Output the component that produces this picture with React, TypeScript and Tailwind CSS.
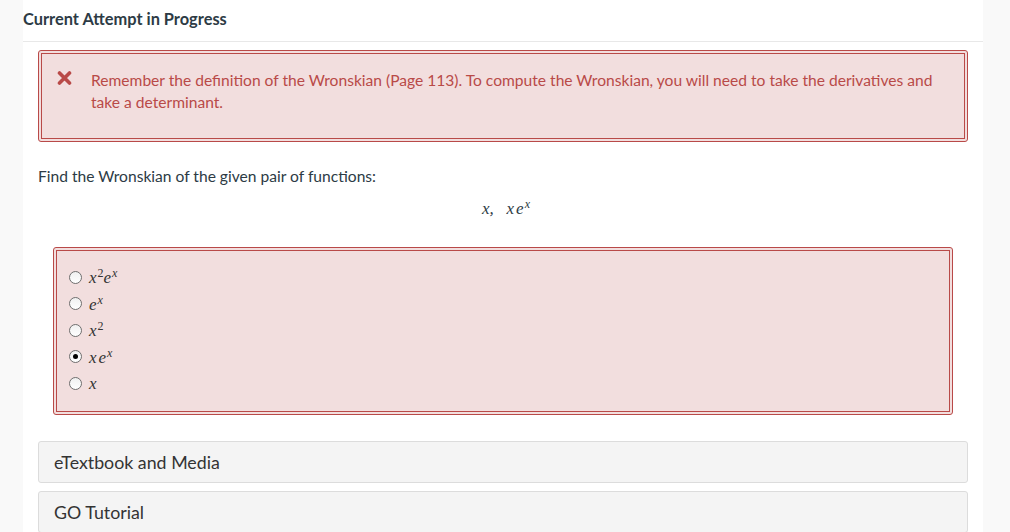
import React from "react";

const M = ({ children }: { children: React.ReactNode }) => (
  <span className="italic" style={{ fontFamily: '"Liberation Serif", "DejaVu Serif", serif' }}>{children}</span>
);

function Radio({ checked }: { checked?: boolean }) {
  return (
    <span className="w-[13px] h-[13px] rounded-full border border-[#6f6f6f] bg-gradient-to-b from-[#f0f0f0] to-white flex items-center justify-center shrink-0">
      {checked && <span className="w-[5px] h-[5px] rounded-full bg-black" />}
    </span>
  );
}

const Sup = ({ children, italic = true }: { children: React.ReactNode; italic?: boolean }) => (
  <sup className={"text-[12px] ml-[1px] " + (italic ? "" : "not-italic")}>{children}</sup>
);

const XE = () => (
  <>
    x<span className="ml-[2px]">e</span>
    <Sup>x</Sup>
  </>
);

const options: { node: React.ReactNode; checked?: boolean }[] = [
  { node: <M>x<Sup italic={false}>2</Sup>e<Sup>x</Sup></M> },
  { node: <M>e<Sup>x</Sup></M> },
  { node: <M>x<Sup italic={false}>2</Sup></M> },
  { node: <M><XE /></M>, checked: true },
  { node: <M>x</M> },
];

function Cross() {
  return (
    <svg width="15" height="14" viewBox="0 0 15 14" className="shrink-0 mt-[2px]">
      <path d="M2.5 2 L12.5 12 M12.5 2 L2.5 12" stroke="#b94a48" strokeWidth="3.6" strokeLinecap="round" />
    </svg>
  );
}

export default function App() {
  return (
    <div className="w-[1010px] h-[532px] bg-[#f9f9f9] overflow-hidden" style={{ fontFamily: 'Lato, "Open Sans", sans-serif' }}>
      <div className="ml-[23px] w-[960px] h-full bg-white">
        <div className="h-[42px] border-b border-[#e8e8e8] flex items-start">
          <h2 className="text-[16.4px] font-bold text-[#2d3b45] leading-[20px] mt-[9px]">Current Attempt in Progress</h2>
        </div>
        <div className="px-[15px] pt-[8px]">
          <div className="border border-[#b94a48] rounded-[3px] p-[2px] bg-[#f2dede]">
            <div className="border border-[#b94a48] h-[86px] flex items-start pl-[15px] pt-[15px]">
              <Cross />
              <p className="ml-[19px] w-[850px] text-[15.6px] leading-[22px] text-[#b94a48]">
                Remember the definition of the Wronskian (Page 113). To compute the Wronskian, you will need to take the derivatives and take a determinant.
              </p>
            </div>
          </div>
          <p className="mt-[23px] text-[15.6px] leading-[22px] text-[#2d3b45]">Find the Wronskian of the given pair of functions:</p>
          <div className="mt-[11px] flex justify-center text-[17px] leading-[22px] text-[#2d3b45] pl-[6px]">
            <M>x,&nbsp;&nbsp;&nbsp;<XE /></M>
          </div>
          <div className="px-[15px] mt-[27px]">
            <div className="border border-[#b94a48] rounded-[3px] p-[2px] bg-[#f2dede]">
              <div className="border border-[#b94a48] h-[162px] pt-[13px] pl-[12px]">
                {options.map((o, i) => (
                  <div key={i} className="h-[26.5px] flex items-center gap-[7px] text-[17px] text-[#333]">
                    <Radio checked={o.checked} />
                    <span className="leading-none">{o.node}</span>
                  </div>
                ))}
              </div>
            </div>
          </div>
          <div className="mt-[26px] h-[42px] bg-[#f4f4f4] border border-[#dcdcdc] rounded-[3px] flex items-center pl-[15px] text-[17.8px] text-[#333]">
            eTextbook and Media
          </div>
          <div className="mt-[8px] h-[42px] bg-[#f4f4f4] border border-[#dcdcdc] rounded-[3px] flex items-center pl-[15px] text-[17.8px] text-[#333]">
            GO Tutorial
          </div>
        </div>
      </div>
    </div>
  );
}
